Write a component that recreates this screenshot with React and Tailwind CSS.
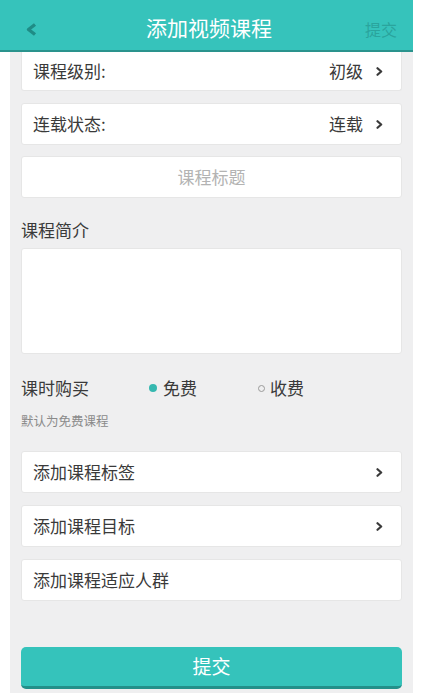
import React from "react";

const font = { fontFamily: '"Noto Sans CJK SC", "Noto Sans", sans-serif' };

function Chevron() {
  return (
    <svg width="7" height="9" viewBox="0 0 7 9" className="shrink-0">
      <path d="M1.5 1.2 L5.2 4.5 L1.5 7.8" fill="none" stroke="#3a3a3a" strokeWidth="2.2" strokeLinecap="round" strokeLinejoin="round" />
    </svg>
  );
}

function Row({ label, value, chevron = true, className = "" }) {
  return (
    <div className={`flex h-[42px] items-center justify-between rounded-[3px] border border-[#e6e6e6] bg-white pl-[11px] pr-[18px] ${className}`}>
      <span className="text-[17px] text-[#3a3a3a]">{label}</span>
      <div className="flex items-center gap-[13px]">
        {value && <span className="text-[17px] text-[#3a3a3a]">{value}</span>}
        {chevron && <Chevron />}
      </div>
    </div>
  );
}

export default function App() {
  return (
    <div className="relative h-[693px] w-[434px] overflow-hidden bg-white" style={font}>
      {/* header */}
      <div className="relative flex h-[52px] w-[413px] items-center border-b-2 border-[#2a938d] bg-[#36c3bb]">
        <svg width="13" height="13" viewBox="0 0 13 13" className="absolute left-[25px] top-[23px]">
          <path d="M10 1.5 L3.5 6.5 L10 11.5" fill="none" stroke="#1f8c86" strokeWidth="3.4" strokeLinejoin="round" />
        </svg>
        <span className="absolute left-[146px] top-[12px] text-[21px] leading-[30px] text-white">添加视频课程</span>
        <span className="absolute left-[365px] top-[17px] text-[16px] leading-[24px] text-[#2aa49d]">提交</span>
      </div>

      {/* content */}
      <div className="ml-[10px] flex h-[641px] w-[403px] flex-col bg-[#efeff0] px-[11px]">
        <div className="flex h-[39px] items-center justify-between rounded-b-[3px] border border-t-0 border-[#e6e6e6] bg-white pl-[11px] pr-[18px]">
          <span className="text-[17px] text-[#3a3a3a]">课程级别:</span>
          <div className="flex items-center gap-[13px]">
            <span className="text-[17px] text-[#3a3a3a]">初级</span>
            <Chevron />
          </div>
        </div>
        <Row label="连载状态:" value="连载" className="mt-[12px]" />
        <div className="mt-[11px] flex h-[42px] items-center justify-center rounded-[3px] border border-[#e6e6e6] bg-white">
          <span className="text-[17px] text-[#b3b3b3]">课程标题</span>
        </div>

        <div className="mt-[19px] h-[26px] text-[17px] leading-[26px] text-[#3a3a3a]">课程简介</div>
        <div className="mt-[5px] h-[106px] rounded-[3px] border border-[#e6e6e6] bg-white" />

        <div className="mt-[21px] flex h-[26px] items-center text-[17px] text-[#3a3a3a]">
          <span className="w-[128px]">课时购买</span>
          <span className="h-[8px] w-[8px] rounded-full bg-[#36b8b0]" />
          <span className="ml-[6px]">免费</span>
          <span className="ml-[61px] h-[7px] w-[7px] rounded-full border border-[#9a9a9a]" />
          <span className="ml-[5px]">收费</span>
        </div>
        <div className="mt-[11px] h-[18px] text-[12.5px] leading-[18px] text-[#8a8a8a]">默认为免费课程</div>

        <Row label="添加课程标签" className="mt-[21px]" />
        <Row label="添加课程目标" className="mt-[12px]" />
        <Row label="添加课程适应人群" chevron={false} className="mt-[12px]" />

        <button className="mt-[46px] flex h-[42px] items-center justify-center rounded-[5px] border-b-[3px] border-[#23908a] bg-[#35c3bb] text-[19px] text-white">
          提交
        </button>
      </div>
    </div>
  );
}
